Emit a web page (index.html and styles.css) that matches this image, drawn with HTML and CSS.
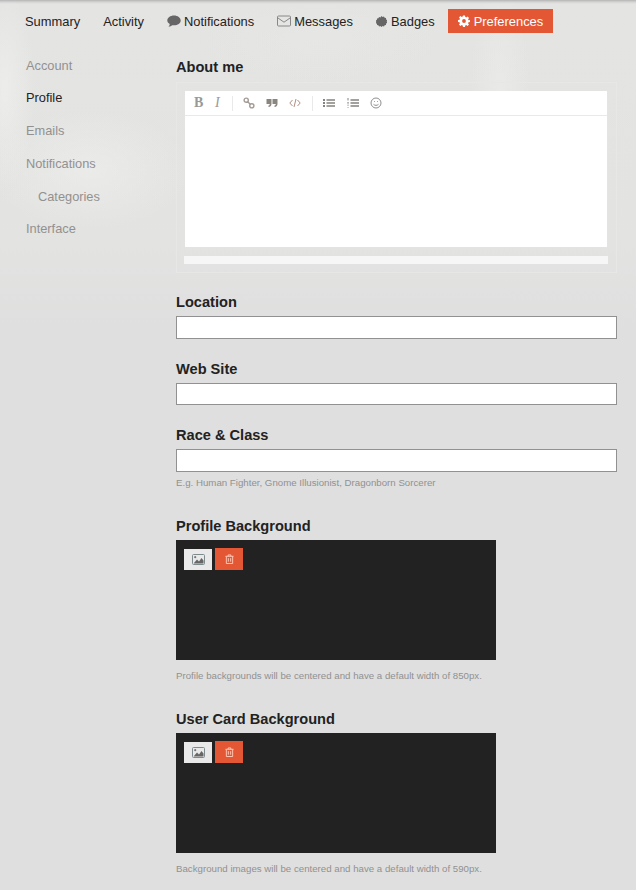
FILE: index.html
```html
<!DOCTYPE html>
<html lang="en">
<head>
<meta charset="utf-8">
<title>Preferences - Profile</title>
<link rel="stylesheet" href="styles.css">
</head>
<body>
<nav class="topnav">
  <a class="tab">Summary</a>
  <a class="tab">Activity</a>
  <a class="tab"><svg class="ico ico-n" viewBox="0 0 14 12"><path d="M7 .5c3.700 0 6.700 2.200 6.700 4.900S10.700 10.300 7 10.300c-.6 0-1.200 0-1.700-.1C4.300 11 3 11.500 1.500 11.700c.7-.8 1.200-1.600 1.300-2.700C1.200 8 .3 6.800.3 5.400.3 2.700 3.300.5 7 .5z"/></svg>Notifications</a>
  <a class="tab"><svg class="ico ico-m" viewBox="0 0 14 12"><rect x=".5" y="1" width="13" height="10" rx="1" fill="none" stroke="#888"/><path d="M1 3l6 4.200L13 3" fill="none" stroke="#888"/></svg>Messages</a>
  <a class="tab"><svg class="ico ico-b" viewBox="0 0 12 12"><path d="M6 0l1.200 1 1.500-.5.700 1.400 1.500.2.100 1.600 1.300.8-.6 1.500.6 1.500-1.300.8-.1 1.600-1.500.2-.7 1.400-1.500-.5L6 12l-1.200-1-1.500.5-.7-1.400-1.500-.2-.1-1.600L-.3 8l.6-1.500L-.3 5l1.300-.8.100-1.600 1.500-.2.700-1.400 1.500.5z"/></svg>Badges</a>
  <a class="tab tab-active"><svg class="ico ico-c" viewBox="0 0 24 24"><path fill="#fff" fill-rule="evenodd" d="M10 1h4l.6 3.100 1.900.8 2.700-1.800 2.800 2.800-1.800 2.700.8 1.900L24 10v4l-3.100.6-.8 1.900 1.800 2.700-2.800 2.800-2.700-1.800-1.900.8L14 24h-4l-.6-3.100-1.900-.8-2.700 1.800L2 19.100l1.800-2.700-.8-1.900L0 14v-4l3.100-.6.800-1.900L2 4.800 4.800 2l2.700 1.800 1.900-.8zM12 8.200a3.800 3.800 0 1 0 0 7.600 3.800 3.800 0 0 0 0-7.600z"/></svg>Preferences</a>
</nav>

<div class="layout">
  <aside class="side">
    <a class="side-item">Account</a>
    <a class="side-item side-current">Profile</a>
    <a class="side-item">Emails</a>
    <a class="side-item">Notifications</a>
    <a class="side-item side-sub">Categories</a>
    <a class="side-item">Interface</a>
  </aside>

  <main class="main">
    <section class="field field-about">
      <h3 class="label">About me</h3>
      <div class="editor">
        <div class="editor-inner">
          <div class="toolbar">
            <span class="tb tb-b">B</span>
            <span class="tb tb-i">I</span>
            <span class="tb-sep"></span>
            <svg class="tb-ico" viewBox="0 0 12 12" fill="none" stroke="#a39b95" stroke-width="1.400"><circle cx="3.200" cy="3.200" r="2.100"/><circle cx="8.800" cy="8.800" r="2.100"/><path d="M4.400 4.400l3.200 3.200"/></svg>
            <svg class="tb-ico" viewBox="0 0 12 12" fill="#8b857f"><path d="M.5 2h5v4.500c0 2-1 3.500-3 3.500V8.500c.8 0 1.300-.6 1.300-1.500H.5zM6.500 2h5v4.500c0 2-1 3.500-3 3.500V8.500c.8 0 1.300-.6 1.300-1.500H6.500z"/></svg>
            <svg class="tb-ico tb-code" viewBox="0 0 12 12" fill="none" stroke="#b08e7e"><path d="M3.500 3L.8 6l2.700 3M8.500 3l2.700 3-2.700 3M7 2L5 10"/></svg>
            <span class="tb-sep"></span>
            <svg class="tb-ico tb-ul" viewBox="0 0 12 12" fill="#85827f"><path d="M0 2h2v2H0zM0 5h2v2H0zM0 8h2v2H0zM3.500 2.300H12v1.400H3.500zM3.500 5.300H12v1.400H3.500zM3.500 8.300H12v1.400H3.500z"/></svg>
            <svg class="tb-ico tb-ol" viewBox="0 0 12 12" fill="#85827f"><path d="M.5 1h1v2.500h-1zM.3 5h1.500v.7H.3zM.3 6.500h1.500v.7H.3zM.3 8.500h1.500v.6H.3zM.3 10h1.500v.6H.3zM3.500 2.300H12v1.400H3.500zM3.500 5.300H12v1.400H3.500zM3.500 8.300H12v1.400H3.500z"/></svg>
            <svg class="tb-ico" viewBox="0 0 12 12" fill="none" stroke="#8f8f8f"><circle cx="6" cy="6" r="5"/><path d="M3.500 7.300c1.300 1.400 3.700 1.400 5 0M4 4.500h.8M7.200 4.500H8"/></svg>
          </div>
          <div class="editor-area"></div>
        </div>
        <div class="editor-preview"></div>
      </div>
    </section>

    <section class="field field-location">
      <h3 class="label">Location</h3>
      <div class="input"></div>
    </section>
    <section class="field field-web">
      <h3 class="label">Web Site</h3>
      <div class="input input-web"></div>
    </section>
    <section class="field field-race">
      <h3 class="label">Race &amp; Class</h3>
      <div class="input"></div>
      <p class="hint">E.g. Human Fighter, Gnome Illusionist, Dragonborn Sorcerer</p>
    </section>

    <section class="field field-bg">
      <h3 class="label">Profile Background</h3>
      <div class="bgbox">
        <span class="btn btn-light"><svg class="btn-ico" viewBox="0 0 13 11"><rect x=".5" y=".5" width="12" height="10" rx="1" fill="none" stroke="#7f8a8e"/><circle cx="3.200" cy="3.200" r="1.100" fill="#777"/><path d="M1.500 9.500L5 5.500l2 2 2.500-3.500 2 2.500v3z" fill="#666"/></svg></span>
        <span class="btn btn-red"><svg class="btn-ico btn-ico-t" viewBox="0 0 10 11" fill="none" stroke="#ffd0c0"><path d="M.5 2.500h9M3.500 2.500V1h3v1.500M1.500 2.500v8h7v-8M3.700 4.500v4M6.300 4.500v4"/></svg></span>
      </div>
      <p class="hint hint-bg">Profile backgrounds will be centered and have a default width of 850px.</p>
    </section>

    <section class="field field-card">
      <h3 class="label">User Card Background</h3>
      <div class="bgbox">
        <span class="btn btn-light"><svg class="btn-ico" viewBox="0 0 13 11"><rect x=".5" y=".5" width="12" height="10" rx="1" fill="none" stroke="#7f8a8e"/><circle cx="3.200" cy="3.200" r="1.100" fill="#777"/><path d="M1.500 9.500L5 5.500l2 2 2.500-3.500 2 2.500v3z" fill="#666"/></svg></span>
        <span class="btn btn-red"><svg class="btn-ico btn-ico-t" viewBox="0 0 10 11" fill="none" stroke="#ffd0c0"><path d="M.5 2.500h9M3.500 2.500V1h3v1.500M1.500 2.500v8h7v-8M3.700 4.500v4M6.300 4.500v4"/></svg></span>
      </div>
      <p class="hint hint-bg">Background images will be centered and have a default width of 590px.</p>
    </section>
  </main>
</div>
</body>
</html>
```

FILE: styles.css
```css
* { box-sizing: border-box; }

html, body { height: 890px; overflow: hidden; }

body {
  margin: 0;
  font-family: "Liberation Sans", Arial, sans-serif;
  font-size: 12.8px;
  color: #222;
  background-color: #dfdfdf;
  background-image:
    linear-gradient(to bottom, #b5b5b5 0, #d4d4d4 2px, rgba(223,223,223,0) 4px),
    radial-gradient(ellipse 30px 110px at 500px 90px, rgba(238,238,236,.55), rgba(238,238,236,0)),
    radial-gradient(ellipse 100px 60px at 90px 170px, rgba(238,238,236,.7), rgba(238,238,236,0)),
    radial-gradient(ellipse 30px 100px at 5px 90px, rgba(240,240,238,.7), rgba(240,240,238,0)),
    radial-gradient(ellipse 120px 40px at 320px 40px, rgba(234,234,232,.4), rgba(234,234,232,0)),
    linear-gradient(to bottom, #e4e4e3 0, #e3e3e2 240px, #dfdfdf 330px);
  background-repeat: no-repeat;
}

/* top nav */
.topnav {
  display: flex;
  gap: 3px;
  padding: 9px 0 0 15px;
  height: 33px;
  font-size: 12.9px;
}

.tab {
  display: flex;
  align-items: center;
  height: 24px;
  padding: 0 10px;
  color: #222;
  white-space: nowrap;
}

.tab-active { background: #e45735; color: #fff; }

.ico { flex: none; fill: #666; }
.ico-n { width: 14px; height: 12px; margin-right: 3px; }
.ico-m { width: 14px; height: 12px; margin-right: 3px; }
.ico-b { width: 11px; height: 11px; margin-right: 4px; }
.ico-c { width: 12px; height: 12px; margin-right: 4px; }

/* layout */
.layout { display: flex; }

.side {
  flex: none;
  width: 176px;
  padding: 16.5px 0 0 26px;
  display: flex;
  flex-direction: column;
}

.side-item {
  height: 32.8px;
  line-height: 32.8px;
  color: #919191;
}

.side-current { color: #222; }
.side-sub { padding-left: 12px; }

.main { width: 441px; }

/* fields */
.label {
  margin: 0;
  font-size: 14.6px;
  line-height: 17px;
  font-weight: bold;
  color: #222;
}

.field-about { padding-top: 26px; }
.field-location { margin-top: 21px; }
.field-web { margin-top: 22px; }
.field-race { margin-top: 22px; }
.field-bg { margin-top: 28px; }
.field-card { margin-top: 28px; }

.editor {
  margin-top: 6px;
  height: 191px;
  padding: 8px 8px 0 7px;
  border: 1px solid #e7e7e6;
}

.editor-inner { background: #fff; margin: 0 1px; height: 156px; }

.toolbar {
  display: flex;
  align-items: center;
  height: 25px;
  padding-left: 9px;
  border-bottom: 1px solid #e9e9e9;
}

.tb {
  width: 21px;
  font-family: "Liberation Serif", serif;
  font-size: 14px;
  color: #999;
}

.tb-b { font-weight: bold; }
.tb-i { font-style: italic; width: 17px; }

.tb-sep {
  width: 1px;
  height: 15px;
  margin-right: 10px;
  background: #e9e9e9;
}

.tb-ico {
  flex: none;
  width: 12px;
  height: 12px;
  margin-right: 11px;
}

.tb-ul { margin-right: 12px; }

.editor-area { height: 131px; }

.editor-preview {
  margin-top: 9px;
  height: 8px;
  background: #f6f6f6;
}

.input {
  margin-top: 5px;
  height: 23px;
  background: #fff;
  border: 1px solid #919191;
}

.input-web { height: 22px; }

.hint {
  margin: 4px 0 0;
  font-size: 9.7px;
  line-height: 14px;
  color: #919191;
}

.hint-bg { margin-top: 9px; }

.bgbox {
  margin-top: 5px;
  width: 320px;
  height: 120px;
  padding: 8px;
  display: flex;
  align-items: flex-start;
  gap: 3px;
  background: #222;
}

.btn {
  display: flex;
  align-items: center;
  justify-content: center;
  width: 28px;
  height: 22px;
}

.btn-light { background: #e9e9e9; margin-top: 1px; height: 21px; }
.btn-red { background: #e45735; }
.btn-ico { width: 13px; height: 11px; }
.btn-ico-t { width: 9px; height: 10px; }
```
